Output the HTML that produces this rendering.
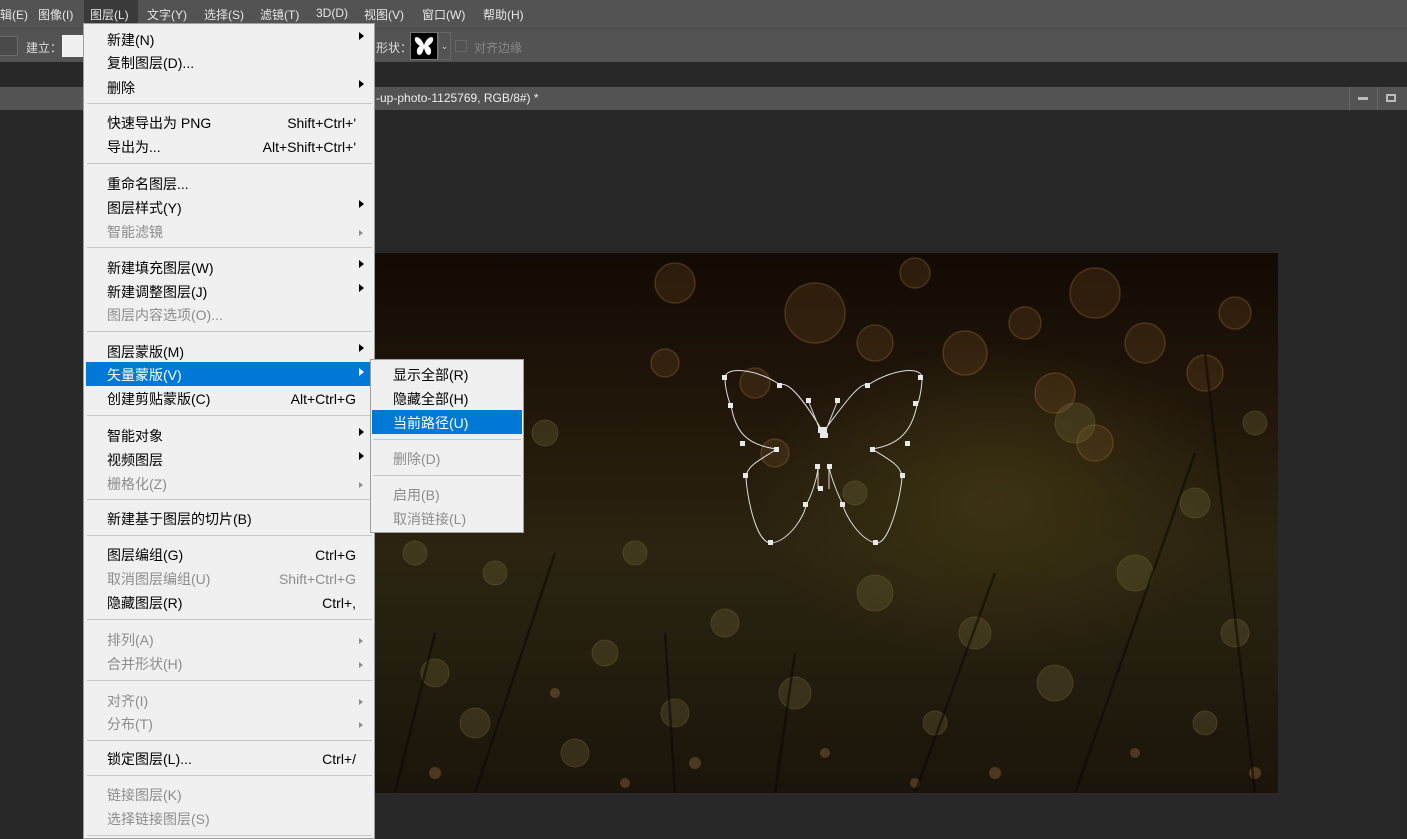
<!DOCTYPE html>
<html><head><meta charset="utf-8"><style>
*{margin:0;padding:0;box-sizing:border-box}
body{width:1407px;height:839px;overflow:hidden;background:#282828;position:relative;font-family:"Liberation Sans","Noto Sans CJK SC",sans-serif}
.a{position:absolute}
.mb{left:0;top:0;width:1407px;height:28px;background:#535353;color:#e6e6e6;font-size:12px}
.mb span{position:absolute;top:6px}
.ob{left:0;top:28px;width:1407px;height:34px;background:#535353;border-top:1px solid #4a4a4a;color:#ddd;font-size:12px}
.tb{left:0;top:87px;width:1407px;height:23px;background:#535353;color:#eee;font-size:12px}
.menu{left:83px;top:23px;width:292px;height:816px;background:#f0f0f0;border:1px solid #a0a0a0;font-size:14px;color:#000}
.it{position:absolute;left:23px;height:24px;line-height:24px;white-space:nowrap}
.dis{color:#8d8d8d}
.sc{position:absolute;right:18px;height:24px;line-height:24px}
.sep{position:absolute;left:3px;width:285px;height:1px;background:#c8c8c8}
.ar{position:absolute;left:275px;width:0;height:0;border-top:4px solid transparent;border-bottom:4px solid transparent;border-left:5px solid #000}
.ar.d{border-left-color:#8d8d8d;border-top-width:3px;border-bottom-width:3px;border-left-width:4px}
.sub{left:370px;top:359px;width:154px;height:174px;background:#f0f0f0;border:1px solid #a0a0a0;font-size:14px}
.sub .it{left:22px}
.sub .sep{left:2px;width:148px}
</style></head><body>
<div class="a mb">
<span style="left:0">辑(E)</span><span style="left:38px">图像(I)</span>
<span style="left:84px;top:0;width:54px;height:28px;background:#3a3a3a"></span>
<span style="left:90px">图层(L)</span><span style="left:147px">文字(Y)</span><span style="left:204px">选择(S)</span><span style="left:260px">滤镜(T)</span><span style="left:316px">3D(D)</span><span style="left:364px">视图(V)</span><span style="left:422px">窗口(W)</span><span style="left:483px">帮助(H)</span>
</div>
<div class="a ob">
<div class="a" style="left:0;top:7px;width:18px;height:20px;border:1px solid #6a6a6a;border-left:none;background:#4a4a4a"></div>
<span class="a" style="left:26px;top:10px">建立：</span>
<div class="a" style="left:62px;top:6px;width:24px;height:22px;background:#f0f0f0"></div>
<span class="a" style="left:376px;top:10px">形状：</span>
<div class="a" style="left:410px;top:3px;width:28px;height:28px;background:#000;border:1px solid #777"><svg width="26" height="26" viewBox="0 0 26 26"><path d="M13 12 C10 4 5 3 4 5 C3 8 6 11 9 13 C5 15 5 21 8 22 C11 22 12 18 13 15 C14 18 15 22 18 22 C21 21 21 15 17 13 C20 11 23 8 22 5 C21 3 16 4 13 12Z" fill="#fff"/></svg></div>
<div class="a" style="left:438px;top:3px;width:13px;height:28px;border:1px solid #666;color:#ccc;font-size:9px;line-height:26px;text-align:center">⌄</div>
<div class="a" style="left:455px;top:11px;width:12px;height:12px;border:1px solid #666"></div>
<span class="a" style="left:474px;top:10px;color:#888">对齐边缘</span>
</div>
<div class="a tb"><span class="a" style="left:376px;top:4px">-up-photo-1125769, RGB/8#) *</span>
<div class="a" style="left:1349px;top:0;height:23px;border-left:1px solid #666"></div>
<div class="a" style="left:1358px;top:10px;width:10px;height:3px;background:#bbb"></div>
<div class="a" style="left:1377px;top:0;height:23px;border-left:1px solid #666"></div>
<div class="a" style="left:1386px;top:7px;width:10px;height:8px;border:2px solid #bbb"></div>
</div>
<div class="a" style="left:375px;top:253px;width:903px;height:540px;overflow:hidden;background:radial-gradient(ellipse 250px 160px at 620px 250px,#3c3212,transparent),linear-gradient(#120a04,#22170a 30%,#2a2410 55%,#221c0e 80%,#1a140a)">
<svg width="903" height="540" style="position:absolute;left:0;top:0">
<g fill="#8a5a28" fill-opacity=".22" stroke="#a06a30" stroke-opacity=".35" stroke-width="1.5">
<circle cx="440" cy="60" r="30"/><circle cx="590" cy="100" r="22"/><circle cx="720" cy="40" r="25"/><circle cx="300" cy="30" r="20"/><circle cx="830" cy="120" r="18"/><circle cx="500" cy="90" r="18"/><circle cx="650" cy="70" r="16"/><circle cx="380" cy="130" r="15"/><circle cx="770" cy="90" r="20"/><circle cx="540" cy="20" r="15"/><circle cx="680" cy="140" r="20"/><circle cx="720" cy="190" r="18"/><circle cx="400" cy="200" r="14"/><circle cx="290" cy="110" r="14"/><circle cx="860" cy="60" r="16"/>
</g>
<g fill="#6f6a3a" fill-opacity=".3" stroke="#8a7a40" stroke-opacity=".3">
<circle cx="170" cy="180" r="13"/><circle cx="700" cy="170" r="20"/><circle cx="350" cy="370" r="14"/><circle cx="500" cy="340" r="18"/><circle cx="820" cy="250" r="15"/><circle cx="200" cy="500" r="14"/><circle cx="600" cy="380" r="16"/><circle cx="120" cy="320" r="12"/><circle cx="60" cy="420" r="14"/><circle cx="260" cy="300" r="12"/><circle cx="760" cy="320" r="18"/><circle cx="860" cy="380" r="14"/><circle cx="420" cy="440" r="16"/><circle cx="560" cy="470" r="12"/><circle cx="680" cy="430" r="18"/><circle cx="300" cy="460" r="14"/><circle cx="100" cy="470" r="15"/><circle cx="830" cy="470" r="12"/><circle cx="230" cy="400" r="13"/><circle cx="40" cy="300" r="12"/><circle cx="480" cy="240" r="12"/><circle cx="880" cy="170" r="12"/>
</g>
<g fill="#b07848" fill-opacity=".35"><circle cx="60" cy="520" r="6"/><circle cx="180" cy="440" r="5"/><circle cx="320" cy="510" r="6"/><circle cx="450" cy="500" r="5"/><circle cx="620" cy="520" r="6"/><circle cx="760" cy="500" r="5"/><circle cx="880" cy="520" r="6"/><circle cx="250" cy="530" r="5"/><circle cx="540" cy="530" r="5"/></g>
<g stroke="#0c0904" stroke-width="2.5" opacity=".6"><path d="M540 540 L620 320"/><path d="M100 540 L180 300"/><path d="M700 540 L820 200"/><path d="M300 540 L290 380"/><path d="M880 540 L830 100"/><path d="M400 540 L420 400"/><path d="M20 540 L60 380"/></g>
<g transform="translate(-375,-253)" fill="none" stroke="#ddd" stroke-width="1">
<path d="M823 432 C810 410 790 380 780 385 C760 370 725 365 725 378 C725 390 730 405 731 405 C735 430 745 445 777 449 C760 460 748 465 746 476 C746 490 755 545 772 543 C790 540 805 515 806 505 C812 495 818 475 818 466 M823 432 C840 410 860 380 868 385 C890 370 922 365 922 378 C922 390 918 405 917 405 C912 430 900 445 872 449 C890 460 900 465 902 476 C902 490 890 545 876 543 C860 540 845 515 843 505 C838 495 830 475 829 466 M818 466 L818 489 M829 466 L829 489 M820 430 L808 400 M826 430 L838 400"/>
</g>
<g transform="translate(-375,-253)" fill="#e8e8e8">
<rect x="722" y="375" width="5" height="5"/><rect x="777" y="383" width="5" height="5"/><rect x="728" y="403" width="5" height="5"/><rect x="740" y="441" width="5" height="5"/><rect x="774" y="447" width="5" height="5"/><rect x="743" y="473" width="5" height="5"/><rect x="803" y="502" width="5" height="5"/><rect x="768" y="540" width="5" height="5"/><rect x="815" y="464" width="5" height="5"/><rect x="827" y="464" width="5" height="5"/><rect x="818" y="486" width="5" height="5"/><rect x="870" y="447" width="5" height="5"/><rect x="900" y="473" width="5" height="5"/><rect x="840" y="502" width="5" height="5"/><rect x="873" y="540" width="5" height="5"/><rect x="913" y="401" width="5" height="5"/><rect x="918" y="375" width="5" height="5"/><rect x="865" y="383" width="5" height="5"/><rect x="905" y="441" width="5" height="5"/><rect x="806" y="398" width="5" height="5"/><rect x="835" y="398" width="5" height="5"/><rect x="818" y="427" width="9" height="6"/><rect x="820" y="433" width="8" height="5"/>
</g>
</svg>
</div>

<div class="a menu">
<div class="it" style="top:4px">新建(N)</div><div class="ar" style="top:8px"></div>
<div class="it" style="top:27px">复制图层(D)...</div>
<div class="it" style="top:52px">删除</div><div class="ar" style="top:56px"></div>
<div class="sep" style="top:79px"></div>
<div class="it" style="top:87px">快速导出为 PNG</div><div class="sc" style="top:87px">Shift+Ctrl+'</div>
<div class="it" style="top:111px">导出为...</div><div class="sc" style="top:111px">Alt+Shift+Ctrl+'</div>
<div class="sep" style="top:139px"></div>
<div class="it" style="top:148px">重命名图层...</div>
<div class="it" style="top:172px">图层样式(Y)</div><div class="ar" style="top:176px"></div>
<div class="it dis" style="top:196px">智能滤镜</div><div class="ar d" style="top:206px"></div>
<div class="sep" style="top:223px"></div>
<div class="it" style="top:232px">新建填充图层(W)</div><div class="ar" style="top:236px"></div>
<div class="it" style="top:256px">新建调整图层(J)</div><div class="ar" style="top:260px"></div>
<div class="it dis" style="top:279px">图层内容选项(O)...</div>
<div class="sep" style="top:307px"></div>
<div class="it" style="top:316px">图层蒙版(M)</div><div class="ar" style="top:320px"></div>
<div style="position:absolute;left:2px;top:338px;width:285px;height:24px;background:#0078d7"></div>
<div class="it" style="top:339px;color:#fff">矢量蒙版(V)</div><div class="ar" style="top:344px;border-left-color:#fff"></div>
<div class="it" style="top:363px">创建剪贴蒙版(C)</div><div class="sc" style="top:363px">Alt+Ctrl+G</div>
<div class="sep" style="top:391px"></div>
<div class="it" style="top:400px">智能对象</div><div class="ar" style="top:404px"></div>
<div class="it" style="top:424px">视频图层</div><div class="ar" style="top:428px"></div>
<div class="it dis" style="top:448px">栅格化(Z)</div><div class="ar d" style="top:458px"></div>
<div class="sep" style="top:475px"></div>
<div class="it" style="top:483px">新建基于图层的切片(B)</div>
<div class="sep" style="top:511px"></div>
<div class="it" style="top:519px">图层编组(G)</div><div class="sc" style="top:519px">Ctrl+G</div>
<div class="it dis" style="top:543px">取消图层编组(U)</div><div class="sc dis" style="top:543px">Shift+Ctrl+G</div>
<div class="it" style="top:567px">隐藏图层(R)</div><div class="sc" style="top:567px">Ctrl+,</div>
<div class="sep" style="top:595px"></div>
<div class="it dis" style="top:604px">排列(A)</div><div class="ar d" style="top:614px"></div>
<div class="it dis" style="top:628px">合并形状(H)</div><div class="ar d" style="top:638px"></div>
<div class="sep" style="top:656px"></div>
<div class="it dis" style="top:665px">对齐(I)</div><div class="ar d" style="top:675px"></div>
<div class="it dis" style="top:688px">分布(T)</div><div class="ar d" style="top:698px"></div>
<div class="sep" style="top:716px"></div>
<div class="it" style="top:723px">锁定图层(L)...</div><div class="sc" style="top:723px">Ctrl+/</div>
<div class="sep" style="top:751px"></div>
<div class="it dis" style="top:759px">链接图层(K)</div>
<div class="it dis" style="top:783px">选择链接图层(S)</div>
<div class="sep" style="top:811px"></div>
</div>

<div class="a sub">
<div class="it" style="top:3px">显示全部(R)</div>
<div class="it" style="top:27px">隐藏全部(H)</div>
<div style="position:absolute;left:1px;top:50px;width:150px;height:24px;background:#0078d7"></div>
<div class="it" style="top:51px;color:#fff">当前路径(U)</div>
<div class="sep" style="top:79px"></div>
<div class="it dis" style="top:87px">删除(D)</div>
<div class="sep" style="top:115px"></div>
<div class="it dis" style="top:123px">启用(B)</div>
<div class="it dis" style="top:147px">取消链接(L)</div>
</div>
</body></html>
